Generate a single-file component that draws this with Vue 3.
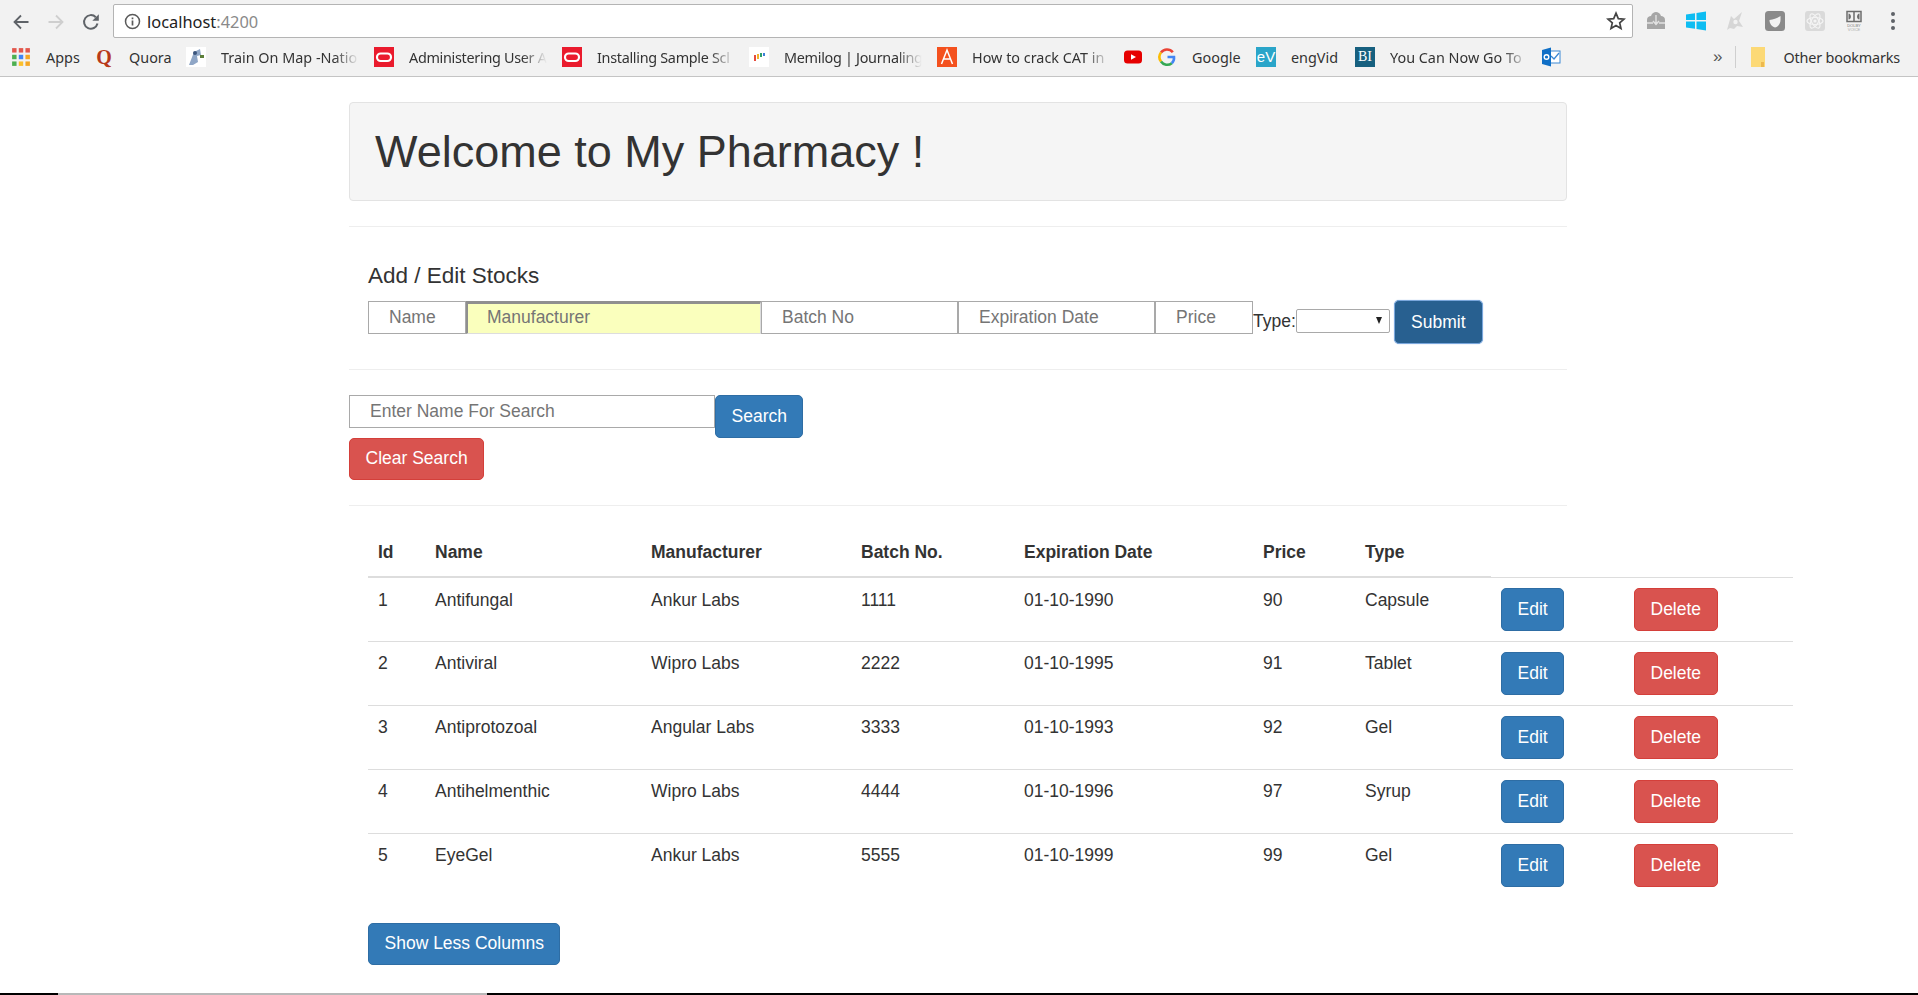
<template>
  <div class="window">
    <header class="toolbar">
      <div class="nav-buttons">
        <svg class="nav-icon" viewBox="0 0 20 20"><path d="M17.500 10H4M10 3.500 3.500 10l6.500 6.500" fill="none" stroke="#5f6368" stroke-width="1.800" /></svg>
        <svg class="nav-icon" viewBox="0 0 20 20"><path d="M2.500 10H16M10 3.500l6.500 6.500-6.500 6.500" fill="none" stroke="#cfcfcf" stroke-width="1.800" /></svg>
        <svg class="nav-icon" viewBox="0 0 20 20"><path d="M16.500 11.500A6.800 6.800 0 1 1 14.800 5.200" fill="none" stroke="#5f6368" stroke-width="2" /><path d="M17.800 2.300v6.500h-6.500z" fill="#5f6368" /></svg>
      </div>
      <div class="address">
        <svg class="info" viewBox="0 0 18 18"><circle cx="9" cy="9" r="7.400" fill="none" stroke="#5a5a5a" stroke-width="1.600" /><path d="M8.100 8h1.800v5.200H8.100zM8.100 4.800h1.800v1.800H8.100z" fill="#5a5a5a" /></svg>
        <span class="host">localhost<span class="port">:4200</span></span>
        <svg class="star" viewBox="0 0 20 20"><path d="M10 2.200l2.300 5.400 5.800.5-4.400 3.800 1.300 5.700-5-3-5 3 1.300-5.700L1.900 8.100l5.800-.5z" fill="none" stroke="#444" stroke-width="1.700" /></svg>
      </div>
      <div class="extensions">
        <svg class="ext" viewBox="0 0 22 22"><path d="M2 10c0-3 2-4 4-4 1-3 3-4 5-4s4 1 5 4c2 0 4 1 4 4v9H2z" fill="#a6a6a6" /><path d="M11 5v9M8 11l3 3.500 3-3.500M2 13h6M14 13h6" fill="none" stroke="#e2e2e2" stroke-width="1.400" /></svg>
        <svg class="ext" viewBox="0 0 22 22"><path d="M1 4.500l9-1.300V10H1zM11.500 2.900 21 1.500V10h-9.500zM1 11.500h9v7.300l-9-1.300zM11.500 11.500H21v9l-9.500-1.400z" fill="#0ebdf2" /></svg>
        <svg class="ext" viewBox="0 0 22 22"><path d="M3 20 7 6l3 3 8-7-3 9 4 6-6-1-3 3-4-1z" fill="#d6d6d6" /><circle cx="11.500" cy="12" r="2.200" fill="#f2f2f2" /></svg>
        <svg class="ext" viewBox="0 0 22 22"><rect x="1" y="1" width="20" height="20" rx="3.500" fill="#8a8a8a" /><path d="M16.500 6v4c0 4-2.500 6.500-5.500 7.500-3-1-5.500-3.500-5.500-7.500 4-.3 7.500-1.500 11-4z" fill="#f1f1f1" /></svg>
        <svg class="ext" viewBox="0 0 22 22"><rect x="1" y="1" width="20" height="20" rx="3" fill="#dadada" /><g fill="none" stroke="#f4f4f4" stroke-width="1.200"><ellipse cx="11" cy="11" rx="8" ry="3.500" /><ellipse cx="11" cy="11" rx="8" ry="3.500" transform="rotate(60 11 11)" /><ellipse cx="11" cy="11" rx="8" ry="3.500" transform="rotate(120 11 11)" /></g><circle cx="11" cy="11" r="1.600" fill="#f4f4f4" /></svg>
        <svg class="ext" viewBox="0 0 22 22"><path d="M4 1.500h7v10H4zM11 1.500h7v10h-7z" fill="none" stroke="#6d6d6d" stroke-width="1.500" /><path d="M5.500 3.500c3 0 3.500 6 0 6zM16.500 3.500c-3 0-3.500 6 0 6z" fill="#6d6d6d" /><text x="11" y="16.500" class="dolby" fill="#777">DOLBY</text><text x="11" y="21" class="dolby" fill="#aaa">VOICE</text></svg>
        <svg class="dots" viewBox="0 0 6 22"><circle cx="3" cy="4" r="2" fill="#5f6368" /><circle cx="3" cy="11" r="2" fill="#5f6368" /><circle cx="3" cy="18" r="2" fill="#5f6368" /></svg>
      </div>
    </header>

    <nav class="bookmarks">
      <div v-for="b in bookmarks" :key="b.label + b.icon" class="bookmark" :style="{ width: b.width + 'px' }">
        <span class="bm-icon">
          <svg v-if="b.icon === 'apps'" viewBox="0 0 18 18">
            <rect v-for="c in appCells" :key="c.x + '-' + c.y" :x="c.x" :y="c.y" width="4" height="4" :fill="c.fill" />
          </svg>
          <span v-else-if="b.icon === 'quora'" class="tile tile-q">Q</span>
          <svg v-else-if="b.icon === 'train'" viewBox="0 0 20 20"><rect width="20" height="20" fill="#fff" /><path d="M3 18 8 5l6-3 1 6-4 1 1 6-5 3z" fill="#8fa6c6" /><path d="M14 8h4v3h-4z" fill="#5c7f3a" /><circle cx="9" cy="6" r="2" fill="#3b557c" /></svg>
          <svg v-else-if="b.icon === 'oracle'" viewBox="0 0 20 20"><rect width="20" height="20" fill="#ea1b2d" /><rect x="3" y="6.500" width="14" height="7.500" rx="3.700" fill="none" stroke="#fff" stroke-width="2.200" /></svg>
          <svg v-else-if="b.icon === 'memilog'" viewBox="0 0 20 20"><rect width="20" height="20" fill="#fff" /><path d="M5 8h2v6H5z" fill="#e74c3c" /><path d="M8 7h2v5H8z" fill="#f1b32b" /><path d="M11 6h2v4h-2z" fill="#2e9e6b" /><path d="M14 6h2v3h-2z" fill="#3b7dd8" /></svg>
          <svg v-else-if="b.icon === 'cat'" viewBox="0 0 20 20"><rect width="20" height="20" fill="#f4511e" /><path d="M4.500 17 10 3l5.500 14M6.500 12h7" fill="none" stroke="#fff" stroke-width="1.500" /></svg>
          <svg v-else-if="b.icon === 'youtube'" viewBox="0 0 20 20"><rect x="1" y="3.500" width="18" height="13" rx="3.500" fill="#e60000" /><path d="M8 7.200 13 10l-5 2.800z" fill="#fff" /></svg>
          <svg v-else-if="b.icon === 'google'" viewBox="0 0 20 20">
            <path d="M15.800 5.300A7.500 7.500 0 0 0 4 5.500" fill="none" stroke="#ea4335" stroke-width="2.600" />
            <path d="M4 5.500a7.500 7.500 0 0 0 0 9" fill="none" stroke="#fbbc05" stroke-width="2.600" />
            <path d="M4 14.500a7.500 7.500 0 0 0 10.800 1.700" fill="none" stroke="#34a853" stroke-width="2.600" />
            <path d="M14.800 16.200A7.500 7.500 0 0 0 17 10h-6.500" fill="none" stroke="#4285f4" stroke-width="2.600" />
          </svg>
          <span v-else-if="b.icon === 'ev'" class="tile tile-ev">eV</span>
          <span v-else-if="b.icon === 'bi'" class="tile tile-bi">BI</span>
          <svg v-else-if="b.icon === 'outlook'" viewBox="0 0 20 20"><rect x="8" y="4" width="11" height="12" fill="#fff" stroke="#3b88d4" /><path d="M10 9l3 3 5-6" fill="none" stroke="#3b88d4" stroke-width="1.300" /><path d="M1 3l9-2.500v19L1 17z" fill="#0f6fc6" /><circle cx="5.500" cy="10" r="2.300" fill="none" stroke="#fff" stroke-width="1.400" /></svg>
        </span>
        <span v-if="b.label" class="bm-label" :class="{ faded: b.faded, tight: b.tight }">{{ b.label }}</span>
      </div>
      <div class="bookmarks-end">
        <span class="more">»</span>
        <span class="bm-sep"></span>
        <svg class="folder" viewBox="0 0 16 24"><path d="M1 2h14v20H1z" fill="#fcd976" /><path d="M11 17h3v5h-3z" fill="#edb94f" /></svg>
        <span class="bm-label other">Other bookmarks</span>
      </div>
    </nav>

    <main class="page">
      <div class="jumbotron"><h1>Welcome to My Pharmacy !</h1></div>
      <hr />
      <section class="stock-form">
        <h4>Add / Edit Stocks</h4>
        <form class="stock-row" @submit.prevent>
          <input class="w-s" placeholder="Name" />
          <input class="w-l filled" placeholder="Manufacturer" />
          <input class="w-m" placeholder="Batch No" />
          <input class="w-m" placeholder="Expiration Date" />
          <input class="w-s" placeholder="Price" />
          <label class="type-label">Type:</label>
          <div class="fake-select"><span class="caret"></span></div>
          <button class="btn submit" type="submit">Submit</button>
        </form>
      </section>
      <hr />
      <section class="search">
        <div class="search-row">
          <input class="search-input" placeholder="Enter Name For Search" />
          <button class="btn primary">Search</button>
        </div>
        <button class="btn danger clear">Clear Search</button>
      </section>
      <hr />
      <section class="stocks">
        <table>
          <colgroup>
            <col v-for="w in colWidths" :key="w.id" :style="{ width: w.px + 'px' }" />
          </colgroup>
          <thead>
            <tr>
              <th v-for="h in headers" :key="h">{{ h }}</th>
              <th class="plain"></th>
              <th class="plain"></th>
            </tr>
          </thead>
          <tbody>
            <tr v-for="s in stocks" :key="s.id">
              <td>{{ s.id }}</td>
              <td>{{ s.name }}</td>
              <td>{{ s.manufacturer }}</td>
              <td>{{ s.batch }}</td>
              <td>{{ s.expiry }}</td>
              <td>{{ s.price }}</td>
              <td>{{ s.type }}</td>
              <td><button class="btn primary">Edit</button></td>
              <td><button class="btn danger">Delete</button></td>
            </tr>
          </tbody>
        </table>
        <button class="btn primary show-less">Show Less Columns</button>
      </section>
    </main>

    <div class="strip"><span class="strip-gray"></span></div>
  </div>
</template>

<script setup>
const palette = ['#e2574c', '#e2574c', '#e2574c', '#4caf50', '#4285f4', '#f5a623', '#4caf50', '#fbc02d', '#f5a623']
const appCells = palette.map((fill, i) => ({ x: 1 + (i % 3) * 6, y: 1 + Math.floor(i / 3) * 6, fill }))

const bookmarks = [
  { icon: 'apps', label: 'Apps', width: 83 },
  { icon: 'quora', label: 'Quora', width: 92 },
  { icon: 'train', label: 'Train On Map -Natio', width: 188, faded: true },
  { icon: 'oracle', label: 'Administering User A', width: 188, faded: true, tight: true },
  { icon: 'oracle', label: 'Installing Sample Scl', width: 187, faded: true, tight: true },
  { icon: 'memilog', label: 'Memilog | Journaling', width: 188, faded: true, tight: true },
  { icon: 'cat', label: 'How to crack CAT in', width: 186, faded: true },
  { icon: 'youtube', label: '', width: 34 },
  { icon: 'google', label: 'Google', width: 99 },
  { icon: 'ev', label: 'engVid', width: 99 },
  { icon: 'bi', label: 'You Can Now Go To', width: 186, faded: true },
  { icon: 'outlook', label: '', width: 35 }
]

const headers = ['Id', 'Name', 'Manufacturer', 'Batch No.', 'Expiration Date', 'Price', 'Type']
const colWidths = [57, 216, 210, 163, 239, 102, 136, 133, 169].map((px, id) => ({ id, px }))

const stocks = [
  { id: 1, name: 'Antifungal', manufacturer: 'Ankur Labs', batch: '1111', expiry: '01-10-1990', price: 90, type: 'Capsule' },
  { id: 2, name: 'Antiviral', manufacturer: 'Wipro Labs', batch: '2222', expiry: '01-10-1995', price: 91, type: 'Tablet' },
  { id: 3, name: 'Antiprotozoal', manufacturer: 'Angular Labs', batch: '3333', expiry: '01-10-1993', price: 92, type: 'Gel' },
  { id: 4, name: 'Antihelmenthic', manufacturer: 'Wipro Labs', batch: '4444', expiry: '01-10-1996', price: 97, type: 'Syrup' },
  { id: 5, name: 'EyeGel', manufacturer: 'Ankur Labs', batch: '5555', expiry: '01-10-1999', price: 99, type: 'Gel' }
]
</script>

<style>
html, body {
  margin: 0;
  background: #fff;
  overflow: hidden;
}
</style>

<style scoped>
.window {
  display: flex;
  flex-direction: column;
  height: 995px;
  overflow: hidden;
  font-family: "Liberation Sans", Arial, sans-serif;
  font-size: 17.5px;
  color: #333;
}

/* browser chrome */
.toolbar {
  display: flex;
  align-items: flex-start;
  height: 38px;
  padding-top: 4px;
  box-sizing: border-box;
  background: #f2f2f2;
}
.nav-buttons {
  display: flex;
  gap: 15px;
  width: 113px;
  padding: 8px 0 0 11px;
  box-sizing: border-box;
}
.nav-icon {
  width: 20px;
  height: 20px;
}
.address {
  display: flex;
  align-items: center;
  width: 1520px;
  height: 34px;
  box-sizing: border-box;
  padding: 0 6px 0 10px;
  background: #fff;
  border: 1px solid #b4b4b4;
  border-radius: 2px;
}
.info {
  width: 17px;
  height: 17px;
  margin-right: 6px;
}
.host {
  font-family: "Noto Sans", sans-serif;
  font-size: 16.4px;
  color: #222;
  flex: 1;
}
.port {
  color: #8a8a8a;
}
.star {
  width: 20px;
  height: 20px;
}
.extensions {
  display: flex;
  align-items: center;
  gap: 17.7px;
  height: 34px;
  padding-left: 12px;
}
.ext {
  width: 22px;
  height: 22px;
}
.dolby {
  font-family: "Liberation Sans", sans-serif;
  font-size: 4px;
  text-anchor: middle;
}
.dots {
  width: 6px;
  height: 22px;
  margin-left: 7px;
}

.bookmarks {
  display: flex;
  align-items: center;
  height: 39px;
  padding-left: 11px;
  box-sizing: border-box;
  background: #f2f2f2;
  border-bottom: 1px solid #c4c4c4;
}
.bookmark {
  display: flex;
  align-items: center;
  gap: 15px;
  flex: none;
}
.bm-icon {
  display: block;
  flex: none;
  width: 20px;
  height: 20px;
}
.bm-icon svg {
  display: block;
  width: 20px;
  height: 20px;
}
.tile {
  display: block;
  width: 20px;
  height: 20px;
  line-height: 20px;
  text-align: center;
  color: #fff;
  font-size: 15px;
}
.tile-q {
  color: #b83a1a;
  font-family: "Liberation Serif", serif;
  font-weight: 700;
  font-size: 20px;
}
.tile-ev {
  background: #2aa5c9;
}
.tile-bi {
  background: #17607f;
  font-family: "Liberation Serif", serif;
  font-size: 14px;
}
.bm-label {
  font-family: "Noto Sans", sans-serif;
  font-size: 14.4px;
  color: #333;
  white-space: nowrap;
}
.other {
  letter-spacing: -0.17px;
}
.faded {
  width: 138px;
  overflow: hidden;
  -webkit-mask-image: linear-gradient(to right, #000 82%, transparent);
  mask-image: linear-gradient(to right, #000 82%, transparent);
}
.tight {
  letter-spacing: -0.3px;
}
.bookmarks-end {
  display: flex;
  align-items: center;
  margin-left: auto;
  padding-right: 18px;
}
.more {
  font-size: 17px;
  color: #555;
  margin-right: 13px;
}
.bm-sep {
  width: 1px;
  height: 22px;
  background: #cfcfcf;
  margin-right: 14px;
}
.folder {
  width: 16px;
  height: 24px;
  margin-right: 17px;
}

/* page */
.page {
  flex: 1;
  width: 1445px;
  margin-left: 349px;
  padding-top: 25px;
  box-sizing: border-box;
}
.jumbotron {
  width: 1218px;
  height: 99px;
  box-sizing: border-box;
  display: flex;
  align-items: center;
  padding-left: 25px;
  background: #f5f5f5;
  border: 1px solid #e3e3e3;
  border-radius: 4px;
}
h1 {
  margin: 0;
  font-size: 45px;
  font-weight: 500;
  color: #333;
}
hr {
  width: 1218px;
  height: 1px;
  margin: 25px 0 0;
  border: 0;
  background: #eee;
}
.stock-form {
  padding: 36px 0 0 19px;
  height: 117px;
  box-sizing: border-box;
}
h4 {
  margin: 0 0 13px;
  font-size: 22.5px;
  font-weight: 500;
  line-height: 25px;
}
.stock-row {
  display: flex;
  align-items: flex-start;
}
input {
  box-sizing: border-box;
  height: 33px;
  padding: 1px 20px;
  border: 1px solid #a9a9a9;
  font: 17.5px "Liberation Sans", Arial, sans-serif;
  color: #333;
  border-radius: 0;
  outline: none;
  background: #fff;
}
input::placeholder {
  color: #757575;
  opacity: 1;
}
.w-s {
  width: 98px;
}
.w-l {
  width: 295px;
}
.w-m {
  width: 197px;
}
.filled {
  padding: 0 20px 2px 19px;
  background: #faffbd;
  border-width: 3px 1px 1px 2px;
  border-color: #8f8f8f #ddd #ddd #8f8f8f;
}
.type-label {
  margin-top: 10px;
}
.fake-select {
  box-sizing: border-box;
  position: relative;
  width: 94px;
  height: 24px;
  margin: 8px 4px 0 0;
  border: 1px solid #a9a9a9;
  border-radius: 2px;
}
.caret {
  position: absolute;
  right: 7px;
  top: 7px;
  border-style: solid;
  border-width: 7px 3.5px 0;
  border-color: #222 transparent transparent;
}
.btn {
  display: block;
  box-sizing: border-box;
  height: 42.5px;
  padding: 0 15.5px;
  border: 1px solid transparent;
  border-radius: 5px;
  color: #fff;
  font: 17.5px "Liberation Sans", Arial, sans-serif;
  white-space: nowrap;
  cursor: pointer;
}
.primary {
  background: #337ab7;
  border-color: #2e6da4;
}
.danger {
  background: #d9534f;
  border-color: #d43f3a;
}
.clear {
  height: 42px;
  padding-bottom: 2px;
}
.submit {
  width: 89px;
  height: 44px;
  margin-top: -1px;
  background: #286090;
  border: 1px solid #7aa7dc;
  box-shadow: 0 0 1px #7aa7dc;
}
.search {
  padding-top: 25px;
}
.search-row {
  display: flex;
  align-items: flex-start;
}
.search-input {
  width: 366px;
}
.search-row .btn {
  width: 88px;
  height: 43px;
}
.stocks {
  padding: 25px 0 0 19px;
}
table {
  width: 1425px;
  table-layout: fixed;
  border-collapse: collapse;
}
th {
  height: 46px;
  box-sizing: border-box;
  padding: 8px 10px 10px;
  text-align: left;
  font-weight: 700;
  border-bottom: 2px solid #ddd;
}
th.plain {
  border-bottom: 1px solid #ddd;
}
td {
  height: 63px;
  box-sizing: border-box;
  padding: 10.5px 10px 10px;
  line-height: 23px;
  vertical-align: top;
  border-bottom: 1px solid #ddd;
}
tbody tr:last-child td {
  border-bottom: 0;
}
.show-less {
  width: 192px;
  margin-top: 26px;
}

.strip {
  flex: none;
  height: 2px;
  background: #000;
}
.strip-gray {
  display: block;
  width: 429px;
  height: 2px;
  margin-left: 58px;
  background: #b8b8b8;
}
</style>
